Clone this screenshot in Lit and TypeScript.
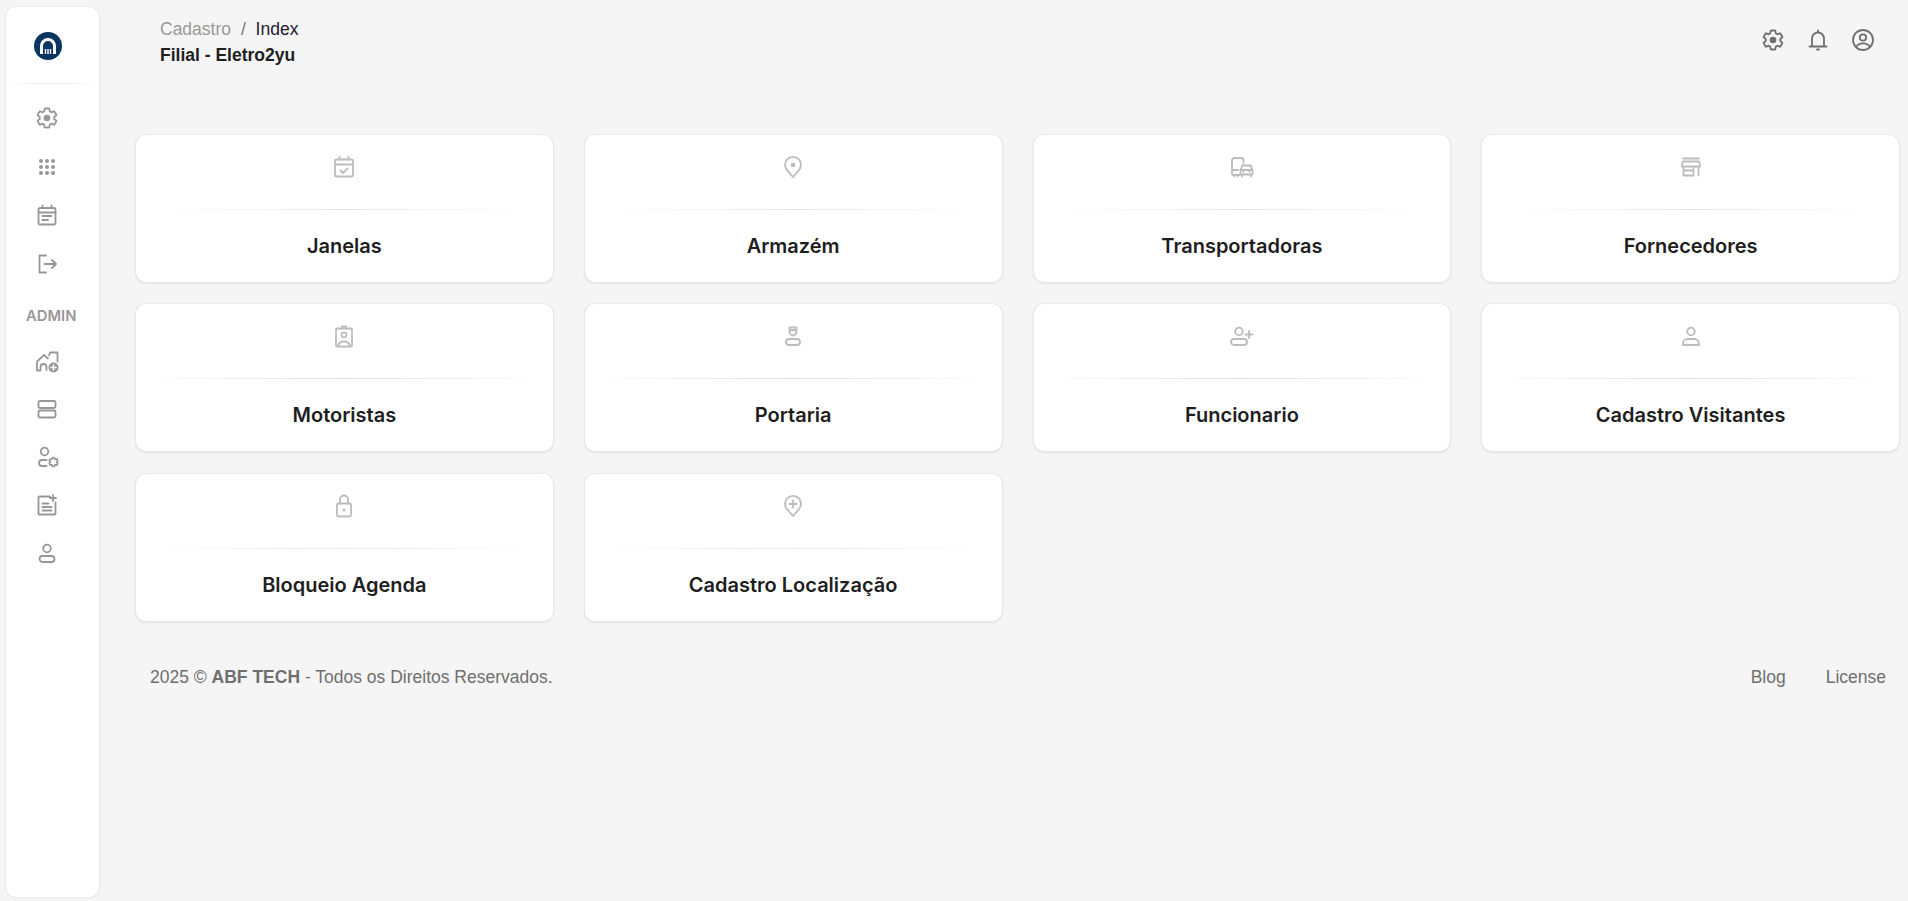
import { LitElement, html, css, svg } from "lit";
import { customElement } from "lit/decorators.js";

const gearPath = "M19.2 13c.1-.3.1-.7.1-1s0-.7-.1-1l2-1.6c.2-.1.2-.4.1-.6l-1.9-3.3c-.1-.2-.4-.3-.6-.2l-2.4 1c-.5-.4-1-.7-1.6-.9l-.4-2.5c0-.2-.2-.4-.5-.4h-3.8c-.2 0-.4.2-.5.4l-.4 2.5c-.6.2-1.1.6-1.6.9l-2.4-1c-.2-.1-.5 0-.6.2L2.7 8.800c-.1.2-.1.5.1.6l2 1.6c-.1.3-.1.7-.1 1s0 .7.100 1l-2 1.600c-.2.1-.2.4-.1.6l1.900 3.300c.1.2.4.3.6.2l2.400-1c.5.4 1 .7 1.600.9l.4 2.500c0 .2.2.4.5.4h3.800c.2 0 .4-.2.5-.4l.4-2.500c.6-.2 1.100-.6 1.600-.9l2.400 1c.2.1.5 0 .6-.2l1.900-3.300c.1-.2.1-.5-.1-.6z";

const icons: Record<string, unknown> = {
  gear: svg`<path d=${gearPath}/><circle class="f" cx="12" cy="12" r="3.300"/>`,
  apps: svg`${[6, 12, 18].flatMap((y) => [6, 12, 18].map((x) => svg`<circle class="f" cx=${x} cy=${y} r="2"/>`))}`,
  note: svg`<rect x="3.500" y="5" width="17" height="16.500" rx="1.500"/><path d="M3.500 9.500h17M7.500 2.500v2.500M16.500 2.500v2.500M7.500 13h9M7.500 17h5.500"/>`,
  exit: svg`<path d="M11 3.500H4.500v17H11M9.500 12H21M17 8l4 4-4 4"/>`,
  homeAdd: svg`<path d="M2 21.500v-9l7-6.500 4 3.500M2 21.500h3.500v-3.500a3 3 0 0 1 6 0v3M14 6.500l1-3h7.500v9"/><circle class="f" cx="18.500" cy="18.500" r="5"/><path class="w" d="M18.500 16v5M16 18.500h5"/>`,
  rows: svg`<rect x="3.500" y="4" width="17" height="7" rx="1.500"/><rect x="3.500" y="13.500" width="17" height="7" rx="1.500"/>`,
  userGear: svg`<circle cx="9.500" cy="6.500" r="3.800"/><path d="M11.500 15H7a3 3 0 0 0 0 6h4.500"/><path class="g" d=${gearPath} transform="translate(13 11.500) scale(.46)"/>`,
  newsAdd: svg`<path d="M15 3.500H4.500a1 1 0 0 0-1 1v16a1 1 0 0 0 1 1h15a1 1 0 0 0 1-1V9.500M7.500 10.500h6M7.500 14h9M7.500 17.500h9M18 2v6M15 5h6"/>`,
  user: svg`<circle cx="12" cy="7.500" r="3.800"/><rect x="4.500" y="15" width="15" height="6" rx="3"/>`,
  calCheck: svg`<rect x="3" y="4.500" width="18" height="17" rx="1.500"/><path d="M3 9.500h18M7.500 2v2.500M16.500 2v2.500M8.500 15.500l2.500 2.500 4.500-4.500"/>`,
  pin: svg`<path d="M12 22l-5.800-6.600a8 8 0 1 1 11.600 0z"/><circle class="f" cx="12" cy="10" r="2.300"/>`,
  transport: svg`<path d="M9.500 20H3.500a1.500 1.500 0 0 1-1.500-1.500V5.500a2.500 2.500 0 0 1 2.500-2.500h6.500a2.500 2.500 0 0 1 2.500 2.500V8M2 15h6M4 20v1.500M7.500 20v1.500"/><path d="M10.500 19.500v-4.500l1.800-4.500h8.400l1.800 4.500v4.500zM10.500 15h12M12 19.500v2M21 19.500v2"/><circle class="f" cx="13.500" cy="17" r="1"/><circle class="f" cx="19.500" cy="17" r="1"/>`,
  store: svg`<path d="M4 3.500h16M3 9.500l1-3h16l1 3v2H3zM4.500 11.500v9h10v-9M19.500 11.500v9M4.500 15.500h10"/>`,
  badge: svg`<rect x="4" y="4.500" width="16" height="18" rx="1"/><path d="M10 4.500V2.500h4v2"/><circle cx="12" cy="10.800" r="2.500"/><path d="M6 21.500c1-3 3.500-4 6-4s5 1 6 4"/>`,
  guard: svg`<path d="M8.500 3.500h7v4.500a3.500 3.500 0 0 1-7 0zM8.500 6h7"/><rect x="5" y="15" width="14" height="6" rx="3"/>`,
  userAdd: svg`<circle cx="9" cy="7.500" r="3.800"/><rect x="1" y="15" width="16" height="6" rx="3"/><path d="M19 7v7M15.500 10.500h7"/>`,
  userCard: svg`<circle cx="12" cy="7.500" r="3.800"/><path d="M4 21v-1.500a4.500 4.500 0 0 1 4.500-4.500h7a4.500 4.500 0 0 1 4.500 4.500V21z"/>`,
  lock: svg`<rect x="5" y="9.500" width="14" height="13" rx="1.500"/><path d="M8 9.500V5.500a4 4 0 0 1 8 0v4"/><circle class="f" cx="12" cy="16" r="1.500"/>`,
  pinAdd: svg`<path d="M12 22l-5.800-6.600a8 8 0 1 1 11.600 0z"/><path d="M12 6.500v7M8.500 10h7"/>`,
  bell: svg`<path d="M3.500 18.500h17M6 18.500v-8a6 6 0 0 1 12 0v8M12 2.500v2M11 21.500h2"/>`,
  account: svg`<circle cx="12" cy="12" r="10"/><circle cx="12" cy="9.500" r="3.200"/><path d="M5 19c2-3 4.700-3.600 7-3.600s5 .6 7 3.600"/>`,
};

const topNav = ["gear", "apps", "note", "exit"];
const adminNav = ["homeAdd", "rows", "userGear", "newsAdd", "user"];
const cards = [
  ["calCheck", "Janelas"],
  ["pin", "Armazém"],
  ["transport", "Transportadoras"],
  ["store", "Fornecedores"],
  ["badge", "Motoristas"],
  ["guard", "Portaria"],
  ["userAdd", "Funcionario"],
  ["userCard", "Cadastro Visitantes"],
  ["lock", "Bloqueio Agenda"],
  ["pinAdd", "Cadastro Localização"],
];

const ico = (name: string, cls = "") =>
  html`<svg class="ico ${cls}" viewBox="0 0 24 24">${icons[name]}</svg>`;

@customElement("app-root")
export class AppRoot extends LitElement {
  static styles = css`
    :host {
      display: flex;
      height: 901px;
      background: #f5f5f5;
      font-family: "Liberation Sans", Arial, sans-serif;
      overflow: hidden;
    }
    .ico {
      width: 24px;
      height: 24px;
      display: block;
      fill: none;
      stroke: currentColor;
      stroke-width: 1.8;
      stroke-linecap: round;
      stroke-linejoin: round;
    }
    .ico .f { fill: currentColor; stroke: none; }
    .ico .w { stroke: #fff; stroke-width: 1.5; }
    .ico .g { stroke-width: 3.6; }
    .side {
      width: 93px;
      box-sizing: border-box;
      margin: 7px 0 4px 6px;
      padding-left: 29px;
      background: #fff;
      border-radius: 10px;
      box-shadow: 0 0 0 1px #ebebeb, 0 1px 3px rgba(0, 0, 0, 0.05);
      display: flex;
      flex-direction: column;
      align-items: flex-start;
      color: #979797;
      flex: none;
    }
    .logo { width: 28px; height: 28px; margin: 25px 0 0 -1px; display: block; flex: none; }
    .rule {
      align-self: stretch;
      height: 1px;
      background: linear-gradient(90deg, transparent, #e6e6e6 50%, transparent);
    }
    .side .rule { margin: 23px 0 22px -29px; }
    .nav { display: flex; flex-direction: column; gap: 24.700px; align-items: center; }
    .admin {
      font: 600 14.800px/18px Inter, sans-serif;
      margin: 31px 0 24px -9px;
    }
    .admin + .nav { gap: 24px; }
    .main {
      flex: 1;
      min-width: 0;
      padding: 0 8px 0 36px;
      display: flex;
      flex-direction: column;
    }
    .head {
      height: 134px;
      box-sizing: border-box;
      padding: 18px 0 0 25px;
      display: flex;
      justify-content: space-between;
      align-items: flex-start;
    }
    .crumb { font-size: 17.500px; line-height: 22px; color: #1f2230; }
    .crumb span { color: #999; }
    .crumb i { font-style: normal; color: #777; margin: 0 5px; }
    .filial { font-weight: 700; font-size: 17.500px; line-height: 22px; margin-top: 4px; color: #1e1e1e; }
    .tools { display: flex; gap: 21px; color: #6f6f6f; margin: 10px 25px 0 0; }
    .grid {
      display: grid;
      grid-template-columns: repeat(4, 1fr);
      gap: 20.400px 30px;
    }
    .card {
      height: 149px;
      box-sizing: border-box;
      background: #fff;
      border: 1px solid #e7e7e7;
      border-top-color: #ebebeb;
      border-radius: 11px;
      box-shadow: 0 1px 2px rgba(0, 0, 0, 0.07);
      display: flex;
      flex-direction: column;
      align-items: center;
      color: #bcbcbc;
      padding-top: 20px;
    }
    .card .rule { margin: 30px 18px 0; }
    .card:nth-child(n + 5):nth-child(-n + 8) .rule {
      margin-left: 8px;
      margin-right: 8px;
      background: linear-gradient(90deg, transparent, #dedede 50%, transparent);
    }
    .card h3 {
      margin: 24px 0 0;
      font: 600 20px/24px Inter, sans-serif;
      color: #1e1e1e;
    }
    .foot {
      margin-top: 44px;
      padding: 0 14px 0 15px;
      display: flex;
      justify-content: space-between;
      font-size: 17.500px;
      line-height: 22px;
      color: #6f6f6f;
    }
    .foot b { font-weight: 700; }
    .links { display: flex; gap: 40px; }
  `;

  render() {
    return html`
      <aside class="side">
        <svg class="logo" viewBox="0 0 28 28">
          <circle cx="14" cy="14" r="14" fill="#0b3561"></circle>
          <path d="M7.500 22v-8a6.500 6.500 0 0 1 13 0v8" fill="none" stroke="#fff" stroke-width="3"></path>
          <path d="M11.500 22v-5M14 22v-5M16.500 22v-5" fill="none" stroke="#fff" stroke-width="1.400"></path>
        </svg>
        <div class="rule"></div>
        <div class="nav">${topNav.map((n) => ico(n))}</div>
        <div class="admin">ADMIN</div>
        <div class="nav">${adminNav.map((n) => ico(n))}</div>
      </aside>
      <div class="main">
        <header class="head">
          <div>
            <div class="crumb"><span>Cadastro</span><i> / </i>Index</div>
            <div class="filial">Filial - Eletro2yu</div>
          </div>
          <div class="tools">${["gear", "bell", "account"].map((n) => ico(n))}</div>
        </header>
        <section class="grid">
          ${cards.map(
            ([i, t]) => html`<article class="card">
              ${ico(i)}
              <div class="rule"></div>
              <h3>${t}</h3>
            </article>`
          )}
        </section>
        <footer class="foot">
          <div>2025 © <b>ABF TECH</b> - Todos os Direitos Reservados.</div>
          <div class="links"><span>Blog</span><span>License</span></div>
        </footer>
      </div>
    `;
  }
}
